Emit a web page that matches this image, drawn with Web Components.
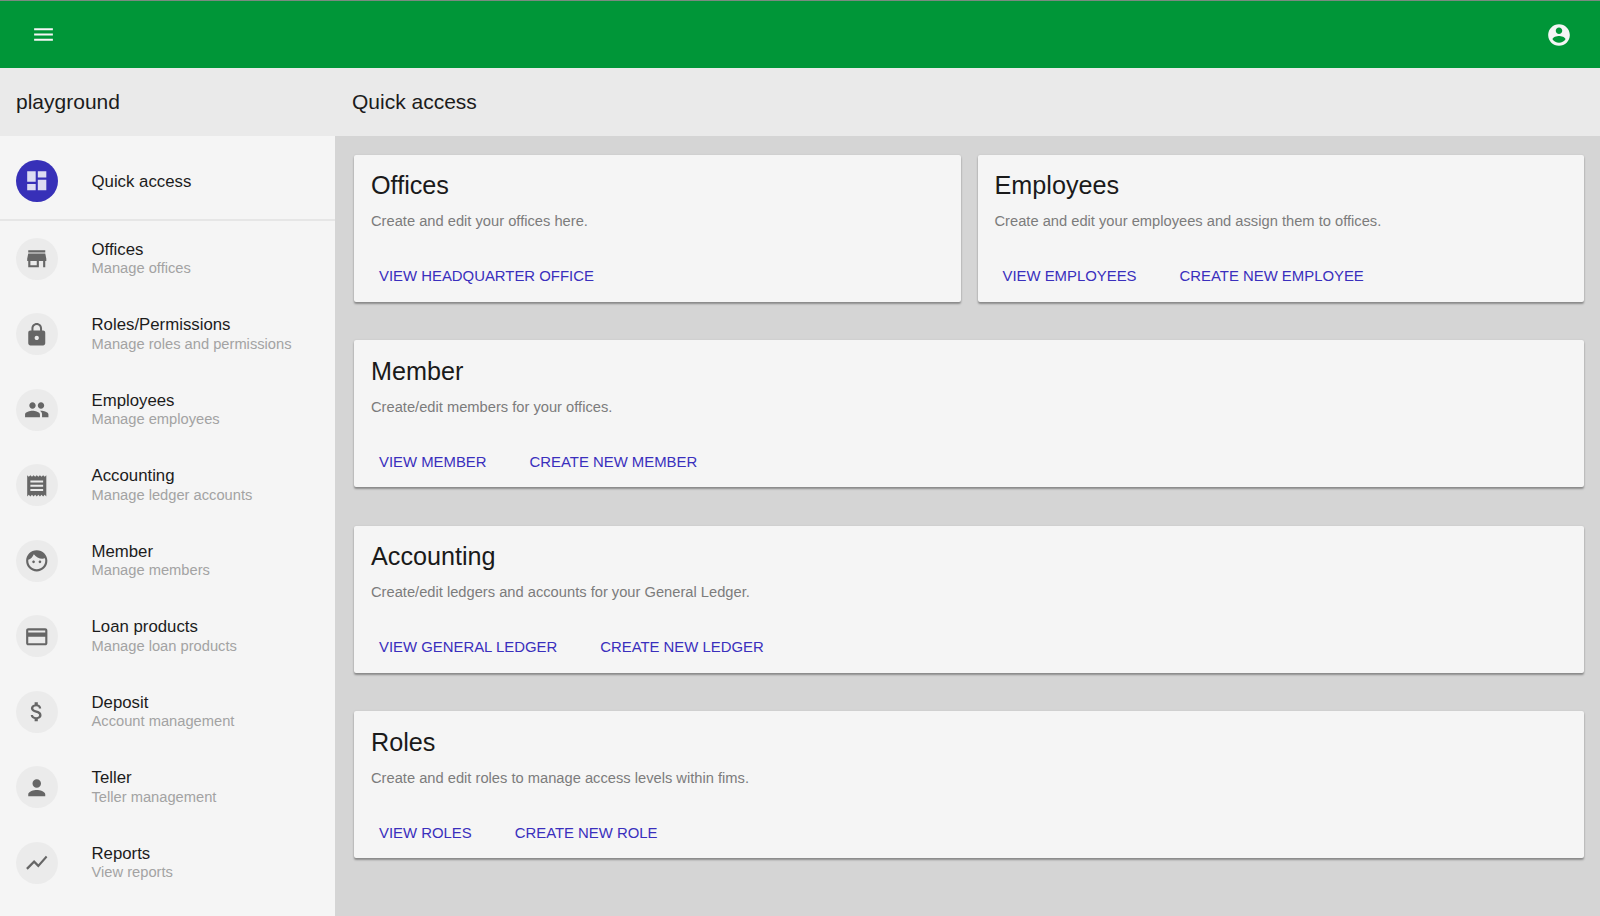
<!DOCTYPE html>
<html lang="en">
<head>
<meta charset="utf-8">
<title>playground</title>
<style>
  html, body { margin: 0; height: 100%; }
  body { font-family: "Liberation Sans", Arial, sans-serif; background: #d5d5d5; overflow: hidden; }
</style>
</head>
<body>
<app-shell>
  <top-bar slot="top"></top-bar>
  <nav-item slot="nav" icon="dashboard" label="Quick access" active></nav-item>
  <nav-item slot="nav" icon="store" label="Offices" sub="Manage offices"></nav-item>
  <nav-item slot="nav" icon="lock" label="Roles/Permissions" sub="Manage roles and permissions"></nav-item>
  <nav-item slot="nav" icon="group" label="Employees" sub="Manage employees"></nav-item>
  <nav-item slot="nav" icon="receipt" label="Accounting" sub="Manage ledger accounts"></nav-item>
  <nav-item slot="nav" icon="face" label="Member" sub="Manage members"></nav-item>
  <nav-item slot="nav" icon="card" label="Loan products" sub="Manage loan products"></nav-item>
  <nav-item slot="nav" icon="money" label="Deposit" sub="Account management"></nav-item>
  <nav-item slot="nav" icon="person" label="Teller" sub="Teller management"></nav-item>
  <nav-item slot="nav" icon="chart" label="Reports" sub="View reports"></nav-item>

  <access-card heading="Offices" text="Create and edit your offices here." actions="VIEW HEADQUARTER OFFICE"></access-card>
  <access-card heading="Employees" text="Create and edit your employees and assign them to offices." actions="VIEW EMPLOYEES|CREATE NEW EMPLOYEE"></access-card>
  <access-card class="wide" heading="Member" text="Create/edit members for your offices." actions="VIEW MEMBER|CREATE NEW MEMBER"></access-card>
  <access-card class="wide" heading="Accounting" text="Create/edit ledgers and accounts for your General Ledger." actions="VIEW GENERAL LEDGER|CREATE NEW LEDGER"></access-card>
  <access-card class="wide" heading="Roles" text="Create and edit roles to manage access levels within fims." actions="VIEW ROLES|CREATE NEW ROLE"></access-card>
</app-shell>

<script>
const ICONS = {
    menu: 'M3 18h18v-2H3v2zm0-5h18v-2H3v2zm0-7v2h18V6H3z',
    account: 'M12 2C6.48 2 2 6.48 2 12s4.48 10 10 10 10-4.48 10-10S17.52 2 12 2zm0 3c1.66 0 3 1.34 3 3s-1.34 3-3 3-3-1.34-3-3 1.34-3 3-3zm0 14.2c-2.5 0-4.71-1.28-6-3.22.03-1.99 4-3.08 6-3.08 1.99 0 5.97 1.09 6 3.08-1.29 1.94-3.5 3.22-6 3.22z',
    dashboard: 'M3 13h8V3H3v10zm0 8h8v-6H3v6zm10 0h8V11h-8v10zm0-18v6h8V3h-8z',
    store: 'M20 4H4v2h16V4zm1 10v-2l-1-5H4l-1 5v2h1v6h10v-6h4v6h2v-6h1zm-9 4H6v-4h6v4z',
    lock: 'M18 8h-1V6c0-2.76-2.24-5-5-5S7 3.24 7 6v2H6c-1.1 0-2 .9-2 2v10c0 1.1.9 2 2 2h12c1.1 0 2-.9 2-2V10c0-1.1-.9-2-2-2zm-6 9c-1.1 0-2-.9-2-2s.9-2 2-2 2 .9 2 2-.9 2-2 2zm3.1-9H8.9V6c0-1.71 1.39-3.1 3.1-3.1 1.71 0 3.1 1.39 3.1 3.1v2z',
    group: 'M16 11c1.66 0 2.99-1.34 2.99-3S17.66 5 16 5c-1.66 0-3 1.34-3 3s1.34 3 3 3zm-8 0c1.66 0 2.99-1.34 2.99-3S9.66 5 8 5C6.34 5 5 6.34 5 8s1.34 3 3 3zm0 2c-2.33 0-7 1.17-7 3.5V19h14v-2.5c0-2.33-4.67-3.5-7-3.5zm8 0c-.29 0-.62.02-.97.05 1.16.84 1.97 1.97 1.97 3.45V19h6v-2.5c0-2.33-4.67-3.5-7-3.5z',
    receipt: 'M18 17H6v-2h12v2zm0-4H6v-2h12v2zm0-4H6V7h12v2zM3 22l1.5-1.5L6 22l1.5-1.5L9 22l1.5-1.5L12 22l1.5-1.5L15 22l1.5-1.5L18 22l1.5-1.5L21 22V2l-1.5 1.5L18 2l-1.5 1.5L15 2l-1.5 1.5L12 2l-1.5 1.5L9 2 7.5 3.5 6 2 4.5 3.5 3 2v20z',
    face: 'M9 11.75c-.69 0-1.25.56-1.25 1.25s.56 1.25 1.25 1.25 1.25-.56 1.25-1.25-.56-1.25-1.25-1.25zm6 0c-.69 0-1.25.56-1.25 1.25s.56 1.25 1.25 1.25 1.25-.56 1.25-1.25-.56-1.25-1.25-1.25zM12 2C6.48 2 2 6.48 2 12s4.48 10 10 10 10-4.48 10-10S17.52 2 12 2zm0 18c-4.41 0-8-3.59-8-8 0-.29.02-.58.05-.86 2.36-1.05 4.23-2.98 5.21-5.37C11.07 8.33 14.05 10 17.42 10c.78 0 1.53-.09 2.25-.26.21.71.33 1.47.33 2.26 0 4.41-3.59 8-8 8z',
    card: 'M20 4H4c-1.11 0-1.99.89-1.99 2L2 18c0 1.11.89 2 2 2h16c1.11 0 2-.89 2-2V6c0-1.11-.89-2-2-2zm0 14H4v-6h16v6zm0-10H4V6h16v2z',
    money: 'M11.8 10.9c-2.27-.59-3-1.2-3-2.15 0-1.09 1.01-1.85 2.7-1.85 1.78 0 2.44.85 2.5 2.1h2.21c-.07-1.72-1.12-3.3-3.21-3.81V3h-3v2.16c-1.94.42-3.5 1.68-3.5 3.61 0 2.31 1.91 3.46 4.7 4.13 2.5.6 3 1.48 3 2.41 0 .69-.49 1.79-2.7 1.79-2.06 0-2.87-.92-2.98-2.1h-2.2c.12 2.19 1.76 3.42 3.68 3.83V21h3v-2.15c1.95-.37 3.5-1.5 3.5-3.55 0-2.84-2.43-3.81-4.7-4.4z',
    person: 'M12 12c2.21 0 4-1.79 4-4s-1.79-4-4-4-4 1.79-4 4 1.79 4 4 4zm0 2c-2.67 0-8 1.34-8 4v2h16v-2c0-2.66-5.33-4-8-4z',
    chart: 'M3.5 18.49l6-6.01 4 4L22 6.92l-1.41-1.41-7.09 7.97-4-4L2 16.99z'
};

function iconSvg(name, size) {

    return `<svg width="${size}" height="${size}" viewBox="0 0 24 24" fill="currentColor"><path d="${ICONS[name]}"/></svg>`;
}

class TopBar extends HTMLElement {

    constructor() {

        super();

        this.attachShadow({mode: 'open'}).innerHTML = `
            <style>
                :host {
                  display: flex;
                  align-items: center;
                  justify-content: space-between;
                  box-sizing: border-box;
                  height: 68px;
                  padding: 0 28px 0 31px;
                  background: #009638;
                  border-top: 1px solid #7a8a80;
                  color: #f5f5f5;
                }
                svg { display: block; }
            </style>
            ${iconSvg('menu', 25)}
            ${iconSvg('account', 26)}
        `;
    }
}

class NavItem extends HTMLElement {

    constructor() {

        super();

        const sub = this.getAttribute('sub');

        this.attachShadow({mode: 'open'}).innerHTML = `
            <style>
                :host {
                  display: flex;
                  align-items: center;
                  box-sizing: border-box;
                  height: 75.5px;
                  padding-left: 16px;
                  color: #1c1c1c;
                }
                :host([active]) {
                  height: 85px;
                  padding-top: 7px;
                  border-bottom: 2px solid #e6e6e6;
                }
                .avatar {
                  display: flex;
                  align-items: center;
                  justify-content: center;
                  flex: none;
                  width: 42px;
                  height: 42px;
                  margin-right: 33.5px;
                  border-radius: 50%;
                  background: #ebebeb;
                  color: #666;
                }
                :host([active]) .avatar {
                  background: #3730b8;
                  color: #dcdcf2;
                }
                .label { font-size: 16.8px; line-height: 20px; margin: -0.5px 0 0.5px; }
                :host([active]) .label { margin: 2px 0 0; }
                .sub { font-size: 14.7px; line-height: 17px; color: #a3a3a3; }
            </style>
            <span class="avatar">${iconSvg(this.getAttribute('icon'), 25.5)}</span>
            <div>
                <div class="label">${this.getAttribute('label')}</div>
                ${sub ? `<div class="sub">${sub}</div>` : ''}
            </div>
        `;
    }
}

class AccessCard extends HTMLElement {

    constructor() {

        super();

        const links = this.getAttribute('actions').split('|')
            .map(action => `<a>${action}</a>`).join('');

        this.attachShadow({mode: 'open'}).innerHTML = `
            <style>
                :host {
                  display: block;
                  box-sizing: border-box;
                  height: 147px;
                  padding: 16.2px 17px 0;
                  background: #f5f5f5;
                  border-radius: 2px;
                  box-shadow: 0 2px 2px rgba(0,0,0,.34), 0 0 2px rgba(0,0,0,.1);
                }
                h2 {
                  margin: 0;
                  font-size: 25.2px;
                  line-height: 28px;
                  font-weight: 400;
                  color: #1a1a1a;
                }
                p {
                  margin: 12px 0 0;
                  font-size: 14.7px;
                  line-height: 20px;
                  color: #7c7c7c;
                }
                .actions { display: flex; gap: 43px; margin: 35px 0 0 8px; }
                a { font-size: 14.9px; line-height: 20px; color: #3a2fbd; }
            </style>
            <h2>${this.getAttribute('heading')}</h2>
            <p>${this.getAttribute('text')}</p>
            <div class="actions">${links}</div>
        `;
    }
}

class AppShell extends HTMLElement {

    constructor() {

        super();

        this.attachShadow({mode: 'open'}).innerHTML = `
            <style>
                :host {
                  display: grid;
                  grid-template-columns: 335px 1fr;
                  grid-template-rows: 68px 68px 1fr;
                  height: 916px;
                  color: #1c1c1c;
                }
                .top { grid-column: 1 / 3; }
                .title {
                  display: flex;
                  align-items: center;
                  background: #eaeaea;
                  font-size: 21px;
                }
                .title.left { padding-left: 16px; }
                .title.right { padding-left: 17px; }
                nav { background: #f5f5f5; overflow: hidden; }
                main {
                  display: grid;
                  grid-template-columns: 1fr 1fr;
                  grid-auto-rows: 147px;
                  column-gap: 17px;
                  row-gap: 38.45px;
                  align-content: start;
                  padding: 19px 16px 0 19px;
                  overflow: hidden;
                }
                ::slotted(.wide) { grid-column: 1 / 3; }
            </style>
            <div class="top"><slot name="top"></slot></div>
            <div class="title left">playground</div>
            <div class="title right">Quick access</div>
            <nav><slot name="nav"></slot></nav>
            <main><slot></slot></main>
        `;
    }
}

window.customElements.define('top-bar', TopBar);
window.customElements.define('nav-item', NavItem);
window.customElements.define('access-card', AccessCard);
window.customElements.define('app-shell', AppShell);
</script>
</body>
</html>
